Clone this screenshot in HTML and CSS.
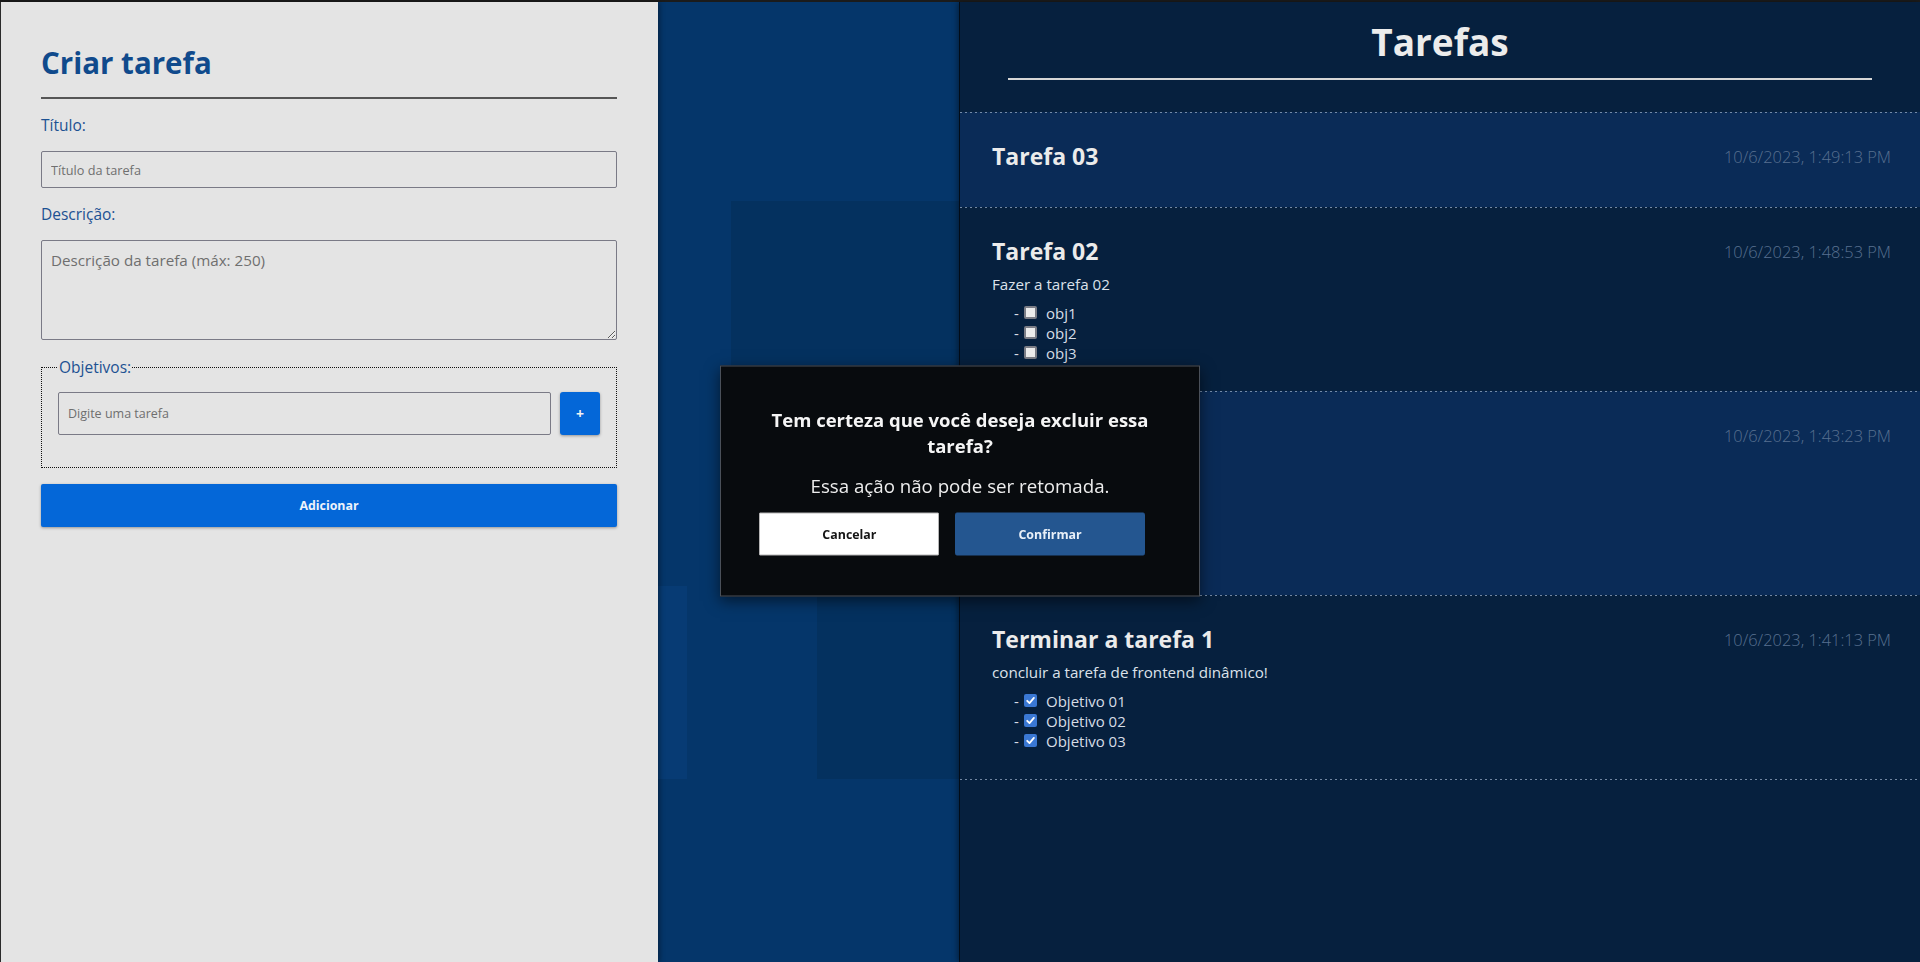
FILE: index.html
```html
<!DOCTYPE html>
<html lang="pt-BR">
<head>
<meta charset="utf-8">
<title>Tarefas</title>
<link rel="stylesheet" href="styles.css">
</head>
<body>
<div class="app">
  <aside class="create-panel">
    <h1 class="create-title">Criar tarefa</h1>
    <hr class="divider">
    <form class="task-form">
      <label class="field-label" for="titulo">Título:</label>
      <input class="field-input" id="titulo" type="text" placeholder="Título da tarefa">
      <label class="field-label" for="descricao">Descrição:</label>
      <textarea class="field-textarea" id="descricao" placeholder="Descrição da tarefa (máx: 250)"></textarea>
      <fieldset class="objectives">
        <legend class="objectives-legend">Objetivos:</legend>
        <div class="objective-row">
          <input class="objective-input" type="text" placeholder="Digite uma tarefa">
          <button type="button" class="add-objective">+</button>
        </div>
      </fieldset>
      <button type="button" class="submit-btn">Adicionar</button>
    </form>
  </aside>

  <div class="backdrop-panel">
    <div class="ghost ghost-a"></div>
    <div class="ghost ghost-b"></div>
    <div class="ghost ghost-c"></div>
  </div>

  <main class="tasks-panel">
    <header class="tasks-header">
      <h2 class="tasks-title">Tarefas</h2>
      <div class="tasks-rule"></div>
    </header>
    <ul class="task-list">
      <li class="task task--empty">
        <div class="task-head">
          <h3 class="task-name">Tarefa 03</h3>
          <span class="task-date">10/6/2023, 1:49:13 PM</span>
        </div>
      </li>
      <li class="task">
        <div class="task-head">
          <h3 class="task-name">Tarefa 02</h3>
          <span class="task-date">10/6/2023, 1:48:53 PM</span>
        </div>
        <p class="task-desc">Fazer a tarefa 02</p>
        <ul class="goal-list">
          <li class="goal"><span class="goal-dash">-</span><span class="check"></span><span class="goal-text">obj1</span></li>
          <li class="goal"><span class="goal-dash">-</span><span class="check"></span><span class="goal-text">obj2</span></li>
          <li class="goal"><span class="goal-dash">-</span><span class="check"></span><span class="goal-text">obj3</span></li>
        </ul>
      </li>
      <li class="task task--covered">
        <div class="task-head">
          <span class="task-name-space"></span>
          <span class="task-date">10/6/2023, 1:43:23 PM</span>
        </div>
        <div class="task-covered-body"></div>
      </li>
      <li class="task">
        <div class="task-head">
          <h3 class="task-name">Terminar a tarefa 1</h3>
          <span class="task-date">10/6/2023, 1:41:13 PM</span>
        </div>
        <p class="task-desc">concluir a tarefa de frontend dinâmico!</p>
        <ul class="goal-list">
          <li class="goal"><span class="goal-dash">-</span><span class="check check--on"><svg viewBox="0 0 13 13" width="13" height="13"><path d="M3.2 6.8 L5.5 9.1 L9.9 3.9" fill="none" stroke="#ffffff" stroke-width="1.8" stroke-linecap="round" stroke-linejoin="round"/></svg></span><span class="goal-text">Objetivo 01</span></li>
          <li class="goal"><span class="goal-dash">-</span><span class="check check--on"><svg viewBox="0 0 13 13" width="13" height="13"><path d="M3.2 6.8 L5.5 9.1 L9.9 3.9" fill="none" stroke="#ffffff" stroke-width="1.8" stroke-linecap="round" stroke-linejoin="round"/></svg></span><span class="goal-text">Objetivo 02</span></li>
          <li class="goal"><span class="goal-dash">-</span><span class="check check--on"><svg viewBox="0 0 13 13" width="13" height="13"><path d="M3.2 6.8 L5.5 9.1 L9.9 3.9" fill="none" stroke="#ffffff" stroke-width="1.8" stroke-linecap="round" stroke-linejoin="round"/></svg></span><span class="goal-text">Objetivo 03</span></li>
        </ul>
      </li>
    </ul>
  </main>
</div>

<div class="modal" role="dialog" aria-modal="true">
  <h3 class="modal-title">Tem certeza que você deseja excluir essa tarefa?</h3>
  <p class="modal-text">Essa ação não pode ser retomada.</p>
  <div class="modal-actions">
    <button type="button" class="btn-cancel">Cancelar</button>
    <button type="button" class="btn-confirm">Confirmar</button>
  </div>
</div>
</body>
</html>
```

FILE: styles.css
```css
* {
  box-sizing: border-box;
}

html, body {
  margin: 0;
  padding: 0;
  height: 100%;
}

body {
  font-family: "Open Sans", "Noto Sans", sans-serif;
  background: #06203e;
  overflow: hidden;
}

.app {
  display: grid;
  grid-template-columns: 658px 301px 1fr;
  height: 100vh;
  border-top: 2px solid #1b1b1b;
}

/* ---------- left panel ---------- */
.create-panel {
  position: relative;
  z-index: 2;
  background: #e4e4e4;
  border-left: 1px solid #2a2a2a;
  padding: 41px 41px 0 40px;
  box-shadow: 2px 0 5px rgba(0, 0, 0, 0.35);
}

.create-title {
  margin: 0;
  font-size: 29.5px;
  line-height: 40px;
  font-weight: 700;
  color: #104a8c;
}

.divider {
  margin: 14px 0 16px;
  border: 0;
  height: 2px;
  background: #565656;
}

.task-form {
  display: flex;
  flex-direction: column;
}

.field-label {
  display: block;
  font-size: 15.5px;
  line-height: 20px;
  color: #1c5192;
  margin-bottom: 16px;
}

.field-input {
  display: block;
  width: 100%;
  height: 37px;
  margin: 0 0 16px;
  padding: 0 9px;
  border: 1px solid #7a7a86;
  border-radius: 2px;
  background: transparent;
  font-family: "Open Sans", sans-serif;
  font-size: 12.7px;
  color: #222;
}

.field-textarea {
  display: block;
  width: 100%;
  height: 100px;
  margin: 0;
  padding: 9px 9px;
  border: 1px solid #7a7a86;
  border-radius: 2px;
  background: transparent;
  font-family: "Open Sans", sans-serif;
  font-size: 15.2px;
  line-height: 20px;
  color: #222;
  resize: vertical;
}

.field-input::placeholder,
.field-textarea::placeholder,
.objective-input::placeholder {
  color: #6f6f6f;
  opacity: 1;
}

.objectives {
  margin: 17px 0 0;
  padding: 15px 16px 32px;
  border: 1px dotted #111;
  min-width: 0;
}

.objectives-legend {
  padding: 0 1px;
  font-size: 15.5px;
  line-height: 20px;
  color: #1c5192;
}

.objective-row {
  display: flex;
  gap: 9px;
}

.objective-input {
  flex: 1;
  height: 43px;
  padding: 0 9px;
  border: 1px solid #7a7a86;
  border-radius: 2px;
  background: transparent;
  font-family: "Open Sans", sans-serif;
  font-size: 12.5px;
  color: #222;
}

.add-objective {
  width: 40px;
  height: 43px;
  border: 0;
  border-radius: 3px;
  background: #0467d8;
  color: #f2f2f2;
  font-family: "Open Sans", sans-serif;
  font-size: 14px;
  font-weight: 700;
  box-shadow: 0 1px 3px rgba(0, 0, 0, 0.35);
  padding: 0;
}

.submit-btn {
  margin-top: 16px;
  height: 43px;
  border: 0;
  border-radius: 2px;
  background: #0467d8;
  color: #eef3fa;
  font-family: "Open Sans", sans-serif;
  font-size: 12.4px;
  font-weight: 700;
  box-shadow: 0 1px 3px rgba(0, 0, 0, 0.35);
}

/* ---------- middle decorative panel ---------- */
.backdrop-panel {
  position: relative;
  z-index: 1;
  background: #05366a;
  overflow: hidden;
}

.ghost {
  position: absolute;
}

.ghost-a {
  left: 73px;
  top: 199px;
  width: 228px;
  height: 396px;
  background: #04315f;
}

.ghost-b {
  left: 0;
  top: 584px;
  width: 29px;
  height: 193px;
  background: #073b74;
}

.ghost-c {
  left: 159px;
  top: 594px;
  width: 142px;
  height: 183px;
  background: #04315f;
}

/* ---------- right panel ---------- */
.tasks-panel {
  position: relative;
  z-index: 2;
  background: #06203e;
  border-left: 1px solid #020c18;
  box-shadow: -2px 0 5px rgba(0, 0, 0, 0.35);
  padding-top: 15px;
}

.tasks-header {
  display: flex;
  flex-direction: column;
  align-items: center;
}

.tasks-title {
  margin: 0;
  font-size: 37px;
  line-height: 50px;
  font-weight: 700;
  color: #ececec;
}

.tasks-rule {
  margin-top: 11px;
  width: 90%;
  height: 2px;
  background: #d6d6d6;
}

.task-list {
  list-style: none;
  margin: 32px 0 0;
  padding: 0;
}

.task {
  padding: 29px 29px 28.5px 32px;
  background-image: linear-gradient(to right, rgba(150, 170, 195, 0.75) 0 2px, transparent 2px 5px);
  background-size: 5px 1px;
  background-repeat: repeat-x;
  background-position: 0 0;
}

.task:nth-child(odd) {
  background-color: #0a2b57;
}

.task:last-child {
  background-image:
    linear-gradient(to right, rgba(150, 170, 195, 0.75) 0 2px, transparent 2px 5px),
    linear-gradient(to right, rgba(150, 170, 195, 0.75) 0 2px, transparent 2px 5px);
  background-size: 5px 1px, 5px 1px;
  background-repeat: repeat-x, repeat-x;
  background-position: 0 0, 0 100%;
  padding-bottom: 29.5px;
}

.task--empty {
  padding-bottom: 36px;
}

.task-head {
  display: flex;
  justify-content: space-between;
  align-items: center;
}

.task-name {
  margin: 0;
  font-size: 23px;
  line-height: 30px;
  font-weight: 700;
  color: #ebebeb;
}

.task-name-space {
  height: 30px;
}

.task-covered-body {
  height: 116.5px;
}

.task-date {
  font-size: 16.4px;
  font-weight: 300;
  color: #587090;
}

.task-desc {
  margin: 7.5px 0 9px;
  font-size: 15.2px;
  line-height: 20px;
  color: #dce2ea;
}

.goal-list {
  list-style: none;
  margin: 0;
  padding: 0 0 0 22px;
}

.goal {
  display: flex;
  align-items: center;
  height: 20px;
  font-size: 15px;
  line-height: 20px;
  color: #d6dde6;
}

.goal-dash {
  width: 10px;
}

.check {
  width: 13px;
  height: 13px;
  margin-right: 9px;
  border: 2px solid #7b7d86;
  border-radius: 2px;
  background: #ececec;
}

.check--on {
  border: 0;
  background: #3a78d4;
  display: flex;
}

.goal-text {
  white-space: nowrap;
}

/* ---------- modal ---------- */
.modal {
  position: fixed;
  left: 50%;
  top: 50%;
  transform: translate(-50%, -50%);
  width: 480px;
  padding: 40px 40px 40px;
  background: #080b0e;
  border: 1px solid #4a5059;
  box-shadow: 0 4px 14px rgba(0, 0, 0, 0.55);
  text-align: center;
  z-index: 10;
}

.modal-title {
  margin: 0;
  font-size: 18.5px;
  line-height: 26px;
  font-weight: 700;
  color: #f5f5f5;
}

.modal-text {
  margin: 14px 0 14px;
  font-size: 18.7px;
  line-height: 26px;
  color: #ededed;
}

.modal-actions {
  display: flex;
  justify-content: center;
}

.btn-cancel,
.btn-confirm {
  height: 43px;
  margin-right: 16px;
  padding: 0 62px;
  font-family: "Open Sans", sans-serif;
  font-size: 12.4px;
  font-weight: 700;
}

.btn-cancel {
  background: #ffffff;
  color: #151515;
  border: 1px solid #b5b5b5;
  border-radius: 1px;
}

.btn-confirm {
  background: #245690;
  color: #e9f0f8;
  border: 1px solid #245690;
  border-radius: 2px;
  padding: 0 62px;
}
```
